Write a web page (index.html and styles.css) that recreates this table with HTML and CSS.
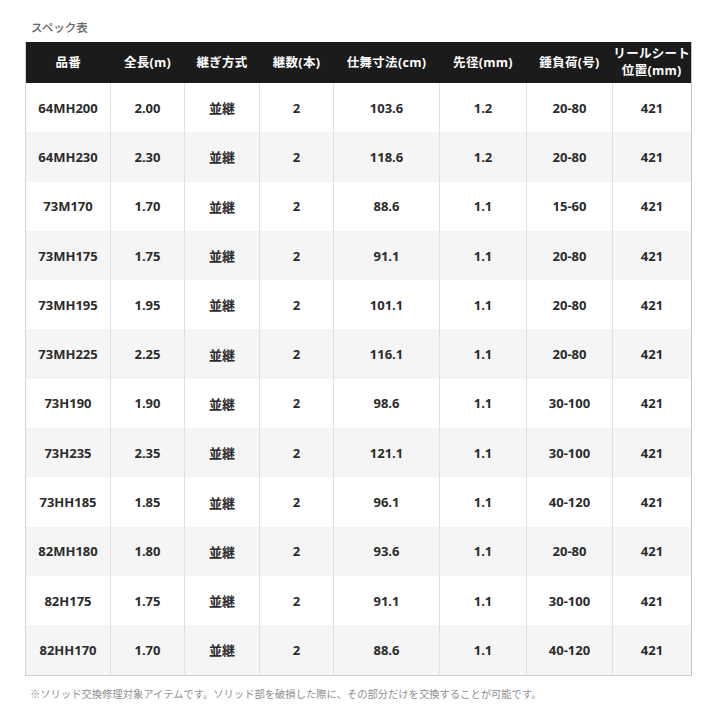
FILE: index.html
```html
<!DOCTYPE html>
<html lang="ja">
<head>
<meta charset="utf-8">
<link rel="stylesheet" href="styles.css">
</head>
<body>
<div class="page">
  <div class="title">スペック表</div>
  <table class="spec">
    <colgroup>
      <col class="c1"><col class="c2"><col class="c3"><col class="c4"><col class="c5"><col class="c6"><col class="c7"><col class="c8">
    </colgroup>
    <thead>
      <tr>
        <th>品番</th><th>全長(m)</th><th>継ぎ方式</th><th>継数(本)</th><th>仕舞寸法(cm)</th><th>先径(mm)</th><th>錘負荷(号)</th><th class="two">リールシート<br>位置(mm)</th>
      </tr>
    </thead>
    <tbody>
      <tr><td>64MH200</td><td>2.00</td><td>並継</td><td>2</td><td>103.6</td><td>1.2</td><td>20-80</td><td>421</td></tr>
      <tr><td>64MH230</td><td>2.30</td><td>並継</td><td>2</td><td>118.6</td><td>1.2</td><td>20-80</td><td>421</td></tr>
      <tr><td>73M170</td><td>1.70</td><td>並継</td><td>2</td><td>88.6</td><td>1.1</td><td>15-60</td><td>421</td></tr>
      <tr><td>73MH175</td><td>1.75</td><td>並継</td><td>2</td><td>91.1</td><td>1.1</td><td>20-80</td><td>421</td></tr>
      <tr><td>73MH195</td><td>1.95</td><td>並継</td><td>2</td><td>101.1</td><td>1.1</td><td>20-80</td><td>421</td></tr>
      <tr><td>73MH225</td><td>2.25</td><td>並継</td><td>2</td><td>116.1</td><td>1.1</td><td>20-80</td><td>421</td></tr>
      <tr><td>73H190</td><td>1.90</td><td>並継</td><td>2</td><td>98.6</td><td>1.1</td><td>30-100</td><td>421</td></tr>
      <tr><td>73H235</td><td>2.35</td><td>並継</td><td>2</td><td>121.1</td><td>1.1</td><td>30-100</td><td>421</td></tr>
      <tr><td>73HH185</td><td>1.85</td><td>並継</td><td>2</td><td>96.1</td><td>1.1</td><td>40-120</td><td>421</td></tr>
      <tr><td>82MH180</td><td>1.80</td><td>並継</td><td>2</td><td>93.6</td><td>1.1</td><td>20-80</td><td>421</td></tr>
      <tr><td>82H175</td><td>1.75</td><td>並継</td><td>2</td><td>91.1</td><td>1.1</td><td>30-100</td><td>421</td></tr>
      <tr><td>82HH170</td><td>1.70</td><td>並継</td><td>2</td><td>88.6</td><td>1.1</td><td>40-120</td><td>421</td></tr>
    </tbody>
  </table>
  <p class="note">※ソリッド交換修理対象アイテムです。ソリッド部を破損した際に、その部分だけを交換することが可能です。</p>
</div>
</body>
</html>
```
FILE: styles.css
```css
html, body {
  margin: 0;
  padding: 0;
  background: #ffffff;
}
body {
  font-family: "Open Sans", "Noto Sans CJK JP", sans-serif;
  color: #333333;
}
.page {
  padding: 20px 0 0 25px;
}
.title {
  font-family: "Noto Sans CJK JP", sans-serif;
  font-size: 11.5px;
  font-weight: 500;
  color: #666666;
  line-height: 14px;
  padding-left: 6px;
  margin-bottom: 8px;
}
.spec {
  border-collapse: collapse;
  table-layout: fixed;
  width: 666px;
  border-left: 1px solid #d4d4d4;
  border-right: 1px solid #c4c4c4;
  border-bottom: 1px solid #d0d0d0;
}
.c1 { width: 85px; }
.c2 { width: 74px; }
.c3 { width: 75px; }
.c4 { width: 74px; }
.c5 { width: 106px; }
.c6 { width: 87px; }
.c7 { width: 86px; }
.c8 { width: 79px; }
.spec thead tr {
  background: #1b1b1b;
}
.spec th {
  height: 39px;
  padding: 0;
  color: #ffffff;
  font-weight: 700;
  font-size: 12.5px;
  text-align: center;
  vertical-align: middle;
  line-height: 16px;
  font-family: "Open Sans", "Noto Sans CJK JP", sans-serif;
  letter-spacing: 0.3px;
}
.spec th.two {
  line-height: 17px;
  padding-bottom: 2px;
}
.spec td {
  height: 49.3px;
  padding: 0;
  text-align: center;
  vertical-align: middle;
  font-weight: 700;
  font-size: 13px;
  color: #2b2b2b;
  border-left: 1px solid #e0e0e0;
}
.spec td:first-child {
  border-left: none;
}
.spec tbody tr:nth-child(even) {
  background: #f5f5f5;
}
.note {
  margin: 11px 0 0 5px;
  font-family: "Noto Sans CJK JP", sans-serif;
  font-size: 10.3px;
  color: #8f8f8f;
  line-height: 14px;
}
```
